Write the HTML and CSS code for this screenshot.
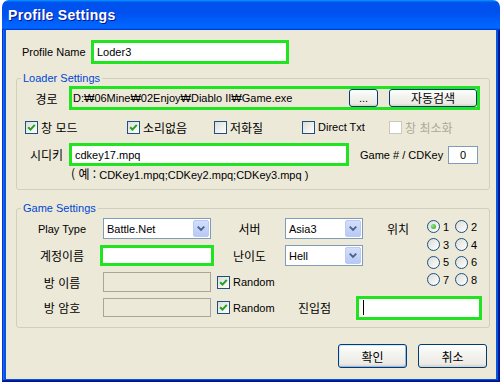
FILE: index.html
```html
<!DOCTYPE html>
<html lang="ko">
  <head>
    <meta charset="UTF-8" />
    <meta name="viewport" content="width=device-width, initial-scale=1.0" />
    <title>Profile Settings</title>
    <link rel="stylesheet" href="styles.css">
  </head>
  <body>
    <div class="window">
      <div class="titlebar">
        <span class="title">Profile Settings</span>
      </div>
      <div class="frame">
        <div class="client">
          <div class="profile-row">
            <span class="profile-label">Profile Name</span>
            <div class="hl edit profile-edit">Loder3</div>
          </div>

          <fieldset class="group loader-group">
            <legend>Loader Settings</legend>
            <div class="path-row">
              <span class="ko row-label">경로</span>
              <div class="hl path-box">
                <div class="path-field">D:₩06Mine₩02Enjoy₩Diablo II₩Game.exe</div>
                <button class="btn btn-browse">...</button>
                <button class="btn btn-search ko">자동검색</button>
              </div>
            </div>
            <div class="check-row">
              <label class="check w1">
                <span class="box"><svg viewBox="0 0 11 11" width="11" height="11"><path d="M2.2 5.2 L4.5 7.6 L8.8 2.8" /></svg></span>
                <span class="ko">창 모드</span>
              </label>
              <label class="check w2">
                <span class="box"><svg viewBox="0 0 11 11" width="11" height="11"><path d="M2.2 5.2 L4.5 7.6 L8.8 2.8" /></svg></span>
                <span class="ko">소리없음</span>
              </label>
              <label class="check w3">
                <span class="box"></span>
                <span class="ko">저화질</span>
              </label>
              <label class="check w4">
                <span class="box"></span>
                <span>Direct Txt</span>
              </label>
              <label class="check disabled">
                <span class="box"></span>
                <span class="ko">창 최소화</span>
              </label>
            </div>
            <div class="cdkey-row">
              <span class="ko row-label">시디키</span>
              <div class="hl edit cdkey-edit">cdkey17.mpq</div>
              <span class="count-label">Game # / CDKey</span>
              <div class="count-edit">0</div>
            </div>
            <div class="hint"><span class="ko">( 예 :</span> CDKey1.mpq;CDKey2.mpq;CDKey3.mpq )</div>
          </fieldset>

          <fieldset class="group game-group">
            <legend>Game Settings</legend>
            <div class="game-grid">
              <span class="glabel first">Play Type</span>
              <div class="combo combo-type">
                <span>Battle.Net</span>
                <span class="drop"><svg viewBox="0 0 15 15" width="15" height="15"><path d="M4 5.5 L7.5 9 L11 5.5" /></svg></span>
              </div>
              <span class="glabel ko">서버</span>
              <div class="combo">
                <span>Asia3</span>
                <span class="drop"><svg viewBox="0 0 15 15" width="15" height="15"><path d="M4 5.5 L7.5 9 L11 5.5" /></svg></span>
              </div>

              <div class="position">
                <span class="ko pos-label">위치</span>
                <div class="radio-grid">
                  <label class="radio-item"><span class="radio on"></span>1</label>
                  <label class="radio-item"><span class="radio"></span>2</label>
                  <label class="radio-item"><span class="radio"></span>3</label>
                  <label class="radio-item"><span class="radio"></span>4</label>
                  <label class="radio-item"><span class="radio"></span>5</label>
                  <label class="radio-item"><span class="radio"></span>6</label>
                  <label class="radio-item"><span class="radio"></span>7</label>
                  <label class="radio-item"><span class="radio"></span>8</label>
                </div>
              </div>

              <span class="glabel first ko">계정이름</span>
              <div class="hl edit account-edit"></div>
              <span class="glabel ko">난이도</span>
              <div class="combo">
                <span>Hell</span>
                <span class="drop"><svg viewBox="0 0 15 15" width="15" height="15"><path d="M4 5.5 L7.5 9 L11 5.5" /></svg></span>
              </div>

              <span class="glabel first ko">방 이름</span>
              <div class="edit-off"></div>
              <label class="check random">
                <span class="box"><svg viewBox="0 0 11 11" width="11" height="11"><path d="M2.2 5.2 L4.5 7.6 L8.8 2.8" /></svg></span>
                <span>Random</span>
              </label>

              <span class="glabel first ko">방 암호</span>
              <div class="edit-off"></div>
              <label class="check random">
                <span class="box"><svg viewBox="0 0 11 11" width="11" height="11"><path d="M2.2 5.2 L4.5 7.6 L8.8 2.8" /></svg></span>
                <span>Random</span>
              </label>
              <div class="entry">
                <span class="ko entry-label">진입점</span>
                <div class="hl edit entry-edit"><span class="caret"></span></div>
              </div>
            </div>
          </fieldset>

          <div class="buttons">
            <button class="btn btn-dialog btn-default ko">확인</button>
            <button class="btn btn-dialog ko">취소</button>
          </div>
        </div>
      </div>
    </div>
  </body>
</html>
```

FILE: styles.css
```css
* {
  box-sizing: border-box;
}
html,
body {
  margin: 0;
  background: #fff;
}
body {
  font-family: "Liberation Sans", "Noto Sans CJK KR", sans-serif;
  font-size: 11px;
  color: #000;
}
.ko {
  font-family: "Noto Sans CJK KR", sans-serif;
  font-size: 12px;
}

/* window chrome */
.window {
  margin-left: 2px;
  width: 498px;
  height: 382px;
  display: flex;
  flex-direction: column;
}
.titlebar {
  flex: none;
  height: 30px;
  display: flex;
  align-items: center;
  padding-left: 6px;
  border-radius: 7px 7px 0 0;
  background: linear-gradient(180deg, #0997ff, #0053ee 8%, #0050ee 40%, #0066ff 88%, #0066ff 93%, #005bff 95%, #003dd7 96%, #003dd7);
}
.title {
  color: #fff;
  font-family: "Liberation Sans", sans-serif;
  font-weight: bold;
  font-size: 14px;
  letter-spacing: 0.3px;
  text-shadow: 1px 1px #0f1089;
}
.frame {
  flex: 1;
  padding: 0 4px 3px;
  background: #0855dd;
  box-shadow: inset -1px -1px #00138c, inset 1px 0 #0831d9, inset -2px -2px #001ea0, inset 2px 0 #166aee;
}
.client {
  height: 100%;
  background: #ece9d8;
  overflow: hidden;
}

/* highlighted controls */
.hl {
  border: 3px solid #1fe41f;
  background: #fff;
}
.edit {
  display: flex;
  align-items: center;
  padding-left: 3px;
  white-space: nowrap;
}

.profile-row {
  display: flex;
  align-items: center;
  height: 24px;
  margin-top: 10px;
  padding-left: 16px;
}
.profile-label {
  width: 69px;
}
.profile-edit {
  width: 198px;
  height: 24px;
}

/* group boxes */
.group {
  margin: 0 0 0 10px;
  width: 474px;
  padding: 0;
  border: 1px solid #d0d0bf;
  border-radius: 3px;
}
.group legend {
  margin-left: 4px;
  padding: 0 2px;
  color: #0046d5;
  font-size: 11px;
  line-height: 14px;
}
.loader-group {
  margin-top: 7px;
  padding-bottom: 7px;
}
.game-group {
  margin-top: 11px;
  padding: 3px 0 10px;
}

.row-label {
  width: 45px;
  text-align: center;
}
.path-row {
  display: flex;
  align-items: center;
  height: 24px;
  margin-top: 1px;
  padding-left: 7px;
}
.path-box {
  display: flex;
  align-items: center;
  width: 411px;
  height: 24px;
  background: #ece9d8;
}
.path-field {
  width: 275px;
  height: 18px;
  line-height: 18px;
  padding-left: 1px;
  white-space: nowrap;
  overflow: hidden;
}

.btn {
  padding: 0;
  border: 1px solid #003c74;
  border-radius: 3px;
  background: linear-gradient(180deg, #fff, #f3f3ef 40%, #ecebe6 85%, #d6d0c5);
  color: #000;
  font-family: "Liberation Sans", sans-serif;
  font-size: 11px;
}
.btn.ko {
  font-family: "Noto Sans CJK KR", sans-serif;
  font-size: 12px;
}
.btn-browse {
  margin-left: 2px;
  width: 29px;
  height: 18px;
  line-height: 14px;
}
.btn-search {
  margin-left: 11px;
  width: 88px;
  height: 18px;
  line-height: 14px;
}

/* check boxes */
.check-row {
  display: flex;
  align-items: center;
  height: 18px;
  margin-top: 8px;
  padding-left: 8px;
}
.check {
  display: flex;
  align-items: center;
}
.check .box {
  flex: none;
  display: flex;
  align-items: center;
  justify-content: center;
  width: 13px;
  height: 13px;
  margin-right: 3px;
  border: 1px solid #1c5180;
  background: linear-gradient(135deg, #dcdcd7, #fff);
}
.check .box path {
  fill: none;
  stroke: #21a121;
  stroke-width: 2;
}
.check.disabled {
  color: #aca899;
}
.check.disabled .box {
  border-color: #cac8bb;
  background: #fff;
}
.w1 {
  width: 102px;
}
.w2 {
  width: 87px;
}
.w3 {
  width: 88px;
}
.w4 {
  width: 87px;
}

.cdkey-row {
  display: flex;
  align-items: center;
  height: 23px;
  margin-top: 7px;
  padding-left: 7px;
}
.cdkey-edit {
  width: 280px;
  height: 23px;
}
.count-label {
  margin-left: 11px;
  width: 88px;
}
.count-edit {
  width: 30px;
  height: 18px;
  line-height: 16px;
  text-align: center;
  border: 1px solid #7f9db9;
  background: #fff;
}
.hint {
  margin-top: 1px;
  padding-left: 54px;
  line-height: 14px;
}

/* game settings */
.game-grid {
  display: grid;
  grid-template-columns: 76px 114px 71px 78px 1fr;
  grid-template-rows: 21px 21px 20px 19px;
  row-gap: 6px;
  padding-left: 7px;
}
.glabel {
  align-self: center;
  text-align: center;
  white-space: nowrap;
}
.glabel.first {
  grid-column: 1;
}
.combo {
  display: flex;
  align-items: center;
  justify-content: space-between;
  padding-left: 3px;
  border: 1px solid #7f9db9;
  background: #fff;
}
.combo-type {
  margin: 0 3px;
}
.drop {
  display: flex;
  align-items: center;
  justify-content: center;
  width: 16px;
  height: 17px;
  margin-right: 1px;
  border: 1px solid #bccaf0;
  border-radius: 2px;
  background: linear-gradient(180deg, #d2defc, #b6c9f6);
}
.drop path {
  fill: none;
  stroke: #4d6185;
  stroke-width: 2;
}
.account-edit {
  height: 21px;
}
.edit-off {
  margin: 0 3px;
  border: 1px solid #a7a69c;
  background: #ece9d8;
}
.random {
  grid-column: 3;
  padding-left: 3px;
}

.position {
  grid-column: 5;
  grid-row: 1 / 4;
  display: flex;
  align-items: flex-start;
  padding-left: 24px;
}
.pos-label {
  flex: none;
  width: 24px;
  line-height: 21px;
  white-space: nowrap;
}
.radio-grid {
  display: grid;
  grid-template-columns: 28px 28px;
  grid-auto-rows: 17.7px;
  margin-left: 16px;
}
.radio-item {
  display: flex;
  align-items: center;
}
.radio {
  display: flex;
  align-items: center;
  justify-content: center;
  width: 13px;
  height: 13px;
  margin-right: 3px;
  border: 1px solid #1c5180;
  border-radius: 50%;
  background: linear-gradient(135deg, #dcdcd7, #fff);
}
.radio.on::after {
  content: "";
  width: 5px;
  height: 5px;
  border-radius: 50%;
  background: radial-gradient(circle at 35% 35%, #8ee68a, #21a121);
}

.entry {
  grid-column: 4 / 6;
  grid-row: 4;
  display: flex;
  align-items: center;
}
.entry-label {
  margin-left: 13px;
  width: 34px;
}
.entry-edit {
  margin-left: 24px;
  width: 126px;
  height: 24px;
}
.caret {
  width: 1px;
  height: 15px;
  margin-left: 1px;
  background: #000;
}

/* dialog buttons */
.buttons {
  display: flex;
  justify-content: flex-end;
  gap: 11px;
  margin-top: 16px;
  padding-right: 9px;
}
.btn-dialog {
  width: 69px;
  height: 24px;
}
.btn-default {
  box-shadow: inset 1px 1px #cee7ff, inset -1px -1px #98b8ea;
}
```
